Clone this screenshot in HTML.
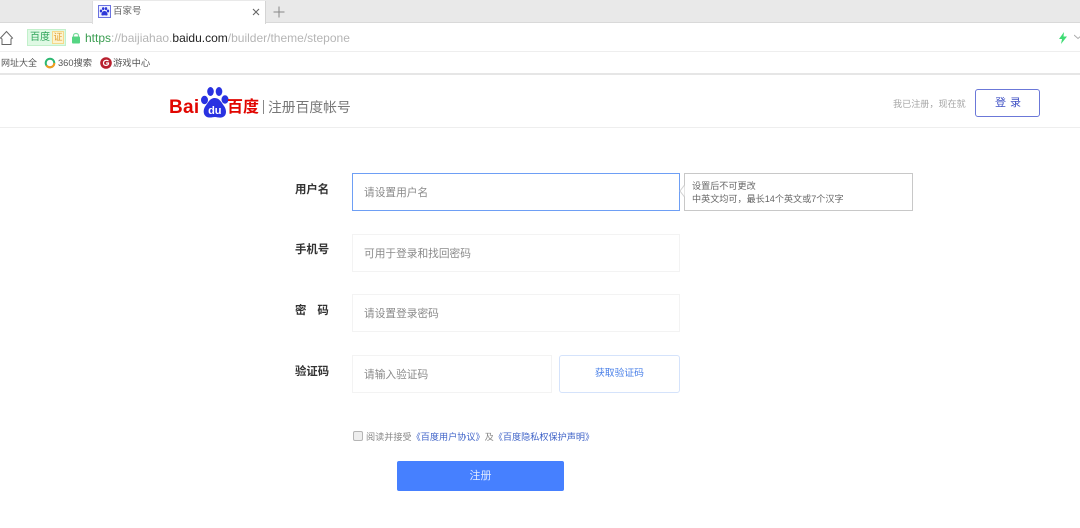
<!DOCTYPE html>
<html lang="zh"><head><meta charset="utf-8"><style>
html,body{margin:0;padding:0;background:#fff}
#p{position:relative;width:1080px;height:528px;overflow:hidden;background:#fff;font-family:"Liberation Sans","Noto Sans CJK SC",sans-serif;color:#666;filter:blur(.3px)}
#p div,#p span.a,#p svg{position:absolute;box-sizing:border-box}
.t{white-space:nowrap;line-height:14px}
.in{background:#fff;border:1px solid #f3f3f3}
.lab{font-size:11.4px;font-weight:bold;color:#333;left:295px;white-space:nowrap;line-height:14px}
.ph{font-size:10.7px;color:#8a8a8a;white-space:nowrap;line-height:14px;left:364px}
</style></head><body><div id="p">
<div style="left:0;top:0;width:1080px;height:23px;background:#e9e9e9;border-bottom:1px solid #d9d9d9"></div>
<div style="left:92px;top:1px;width:174px;height:23px;background:#fff;border-left:1px solid #ddd;border-right:1px solid #d4d4d4"></div>
<svg style="left:98px;top:5px" width="13" height="13" viewBox="0 0 13 13"><rect x=".5" y=".5" width="12" height="12" fill="#eef0ff" stroke="#6a72e0"/><g fill="#2d38d8"><ellipse cx="3" cy="6" rx="1.2" ry="1.5"/><ellipse cx="5.2" cy="3.6" rx="1.2" ry="1.5"/><ellipse cx="8" cy="3.6" rx="1.2" ry="1.5"/><ellipse cx="10" cy="6" rx="1.2" ry="1.5"/><path d="M6.5 6C4.5 6 3 8.5 3.5 10C4 11 5.5 10.3 6.5 10.3C7.5 10.3 9 11 9.5 10C10 8.5 8.5 6 6.5 6Z"/></g></svg>
<div class="t" style="left:113px;top:5px;font-size:9.5px;color:#666">百家号</div>
<svg style="left:252px;top:8px" width="8" height="8" viewBox="0 0 8 8"><path d="M1 1L7 7M7 1L1 7" stroke="#666" stroke-width="1.1"/></svg>
<svg style="left:273px;top:6px" width="12" height="12" viewBox="0 0 12 12"><path d="M6 .5V11.5M.5 6H11.5" stroke="#888" stroke-width="1"/></svg>
<div style="left:0;top:24px;width:1080px;height:28px;background:#fff;border-bottom:1px solid #eee"></div>
<svg style="left:0;top:30px" width="14" height="16" viewBox="0 0 14 16"><path d="M.5 8L6.5 1.5L12.5 8L11 9V14.5H2V9Z" fill="none" stroke="#666" stroke-width="1"/></svg>
<div style="left:27px;top:29px;width:39px;height:17px;background:#dff9e4;border:1px solid #c2f0cb"></div>
<div class="t" style="left:30px;top:31px;font-size:10px;color:#2fa45a">百度</div>
<div class="t" style="left:52px;top:31px;width:12px;height:13px;font-size:9px;color:#e0a030;background:#fdf3cf;border:1px solid #f5d98a;text-align:center;line-height:11px">证</div>
<svg style="left:71px;top:32px" width="10" height="12" viewBox="0 0 10 12"><path d="M2.5 5V3.5C2.5 .8 7.5 .8 7.5 3.5V5" fill="none" stroke="#7fdca0" stroke-width="1.2"/><rect x="1" y="4.5" width="8" height="7" rx="1" fill="#55d583"/></svg>
<div class="t" style="left:85px;top:31px;font-size:12px;color:#b5b5b5"><span style="color:#3a9d50">https</span>://baijiahao.<span style="color:#222">baidu.com</span>/builder/theme/stepone</div>
<svg style="left:1058px;top:32px" width="10" height="12" viewBox="0 0 10 12"><path d="M6 0L1 7H4L3 12L9 4.5H5.5Z" fill="#3fdc74"/></svg>
<svg style="left:1074px;top:34px" width="6" height="6" viewBox="0 0 6 6"><path d="M0 1L4 4.5L8 1" fill="none" stroke="#aaa"/></svg>
<div style="left:0;top:52px;width:1080px;height:23px;background:#fff;border-bottom:2px solid #e6e6e6"></div>
<div class="t" style="left:1px;top:56px;font-size:9px;color:#555">网址大全</div>
<svg style="left:44px;top:57px" width="12" height="12" viewBox="0 0 12 12"><circle cx="6" cy="6" r="4.3" fill="none" stroke="#2eb872" stroke-width="2"/><path d="M2.5 8.5A4.3 4.3 0 0 0 10.3 6" fill="none" stroke="#f39a1f" stroke-width="2"/></svg>
<div class="t" style="left:58px;top:56px;font-size:9.3px;color:#555">360搜索</div>
<svg style="left:100px;top:57px" width="12" height="12" viewBox="0 0 12 12"><circle cx="6" cy="6" r="5.8" fill="#b8202e"/><path d="M8.5 4C7 2.8 3.5 3 3.5 6C3.5 9 7.5 9 8.5 7V6H6" fill="none" stroke="#fff" stroke-width="1.2"/></svg>
<div class="t" style="left:113px;top:56px;font-size:9.3px;color:#555">游戏中心</div>
<div style="left:0;top:127px;width:1080px;height:1px;background:#eee"></div>
<div class="t" style="left:169px;top:97px;font-size:19px;line-height:22px;font-weight:bold;color:#e10601;letter-spacing:.3px">Bai</div>
<svg style="left:199px;top:85px" width="32" height="34" viewBox="0 0 32 34"><g fill="#2932e1"><ellipse cx="5.5" cy="15" rx="3.5" ry="4.2"/><ellipse cx="11.5" cy="6.5" rx="3.3" ry="4.5"/><ellipse cx="20" cy="6.5" rx="3.3" ry="4.5"/><ellipse cx="26" cy="14.5" rx="3.5" ry="4.2"/><path d="M15.8 13C11 13 9.5 17 6.5 21C3.5 25 4 32 10 32.5C12.5 32.7 14 32 16 32C18 32 20 33 22.5 32.5C28 31.5 28 25 25 21C22.5 17.5 20.5 13 15.8 13Z"/></g><text x="15.8" y="29" text-anchor="middle" font-family="Liberation Sans" font-size="11" font-weight="bold" fill="#fff">du</text></svg>
<div class="t" style="left:227px;top:96px;font-size:16px;line-height:24px;font-weight:bold;color:#e10601">百度</div>
<div style="left:263px;top:100px;width:1px;height:14px;background:#888"></div>
<div class="t" style="left:268px;top:99px;font-size:13.8px;line-height:18px;color:#777">注册百度帐号</div>
<div class="t" style="left:893px;top:97px;font-size:9.1px;color:#a5a5a5">我已注册，现在就</div>
<div style="left:975px;top:89px;width:65px;height:28px;border:1px solid #6b78d8;border-radius:3px;background:#fff"></div>
<div class="t" style="left:995px;top:96px;font-size:11px;color:#3f51c4;letter-spacing:4px">登录</div>
<div class="lab" style="top:183px">用户名</div>
<div class="lab" style="top:243px">手机号</div>
<div class="lab" style="top:304px">密<span style="display:inline-block;width:11px"></span>码</div>
<div class="lab" style="top:365px">验证码</div>
<div class="in" style="left:352px;top:173px;width:328px;height:38px;border-color:#6e9ff5"></div>
<div class="ph" style="top:186px">请设置用户名</div>
<div class="in" style="left:352px;top:234px;width:328px;height:38px"></div>
<div class="ph" style="top:247px">可用于登录和找回密码</div>
<div class="in" style="left:352px;top:294px;width:328px;height:38px"></div>
<div class="ph" style="top:307px">请设置登录密码</div>
<div class="in" style="left:352px;top:355px;width:200px;height:38px"></div>
<div class="ph" style="top:368px">请输入验证码</div>
<div style="left:559px;top:355px;width:121px;height:38px;border:1px solid #d5e3fb;border-radius:3px;background:#fff"></div>
<div class="t" style="left:559px;top:367px;width:121px;text-align:center;font-size:9.8px;color:#4a80e8">获取验证码</div>
<div style="left:684px;top:173px;width:229px;height:38px;border:1px solid #c8c8c8;background:#fff"></div>
<svg style="left:679px;top:184px" width="6" height="14" viewBox="0 0 6 14"><path d="M5.5 1L1 7L5.5 13" fill="#fff" stroke="#d0d0d0"/></svg>
<div class="t" style="left:692px;top:179px;font-size:9.1px;color:#666">设置后不可更改</div>
<div class="t" style="left:692px;top:192px;font-size:9.1px;color:#666">中英文均可，最长14个英文或7个汉字</div>
<div style="left:353px;top:431px;width:10px;height:10px;border:1px solid #b5b5b5;border-radius:2px;background:#eee"></div>
<div class="t" style="left:366px;top:430px;font-size:9.15px;color:#888">阅读并接受<span style="color:#3f63c8">《百度用户协议》</span>及<span style="color:#3f63c8">《百度隐私权保护声明》</span></div>
<div style="left:397px;top:461px;width:167px;height:30px;background:#4680ff;border-radius:2px"></div>
<div class="t" style="left:397px;top:469px;width:167px;text-align:center;font-size:11px;color:#dfe9ff">注册</div>
</div></body></html>
